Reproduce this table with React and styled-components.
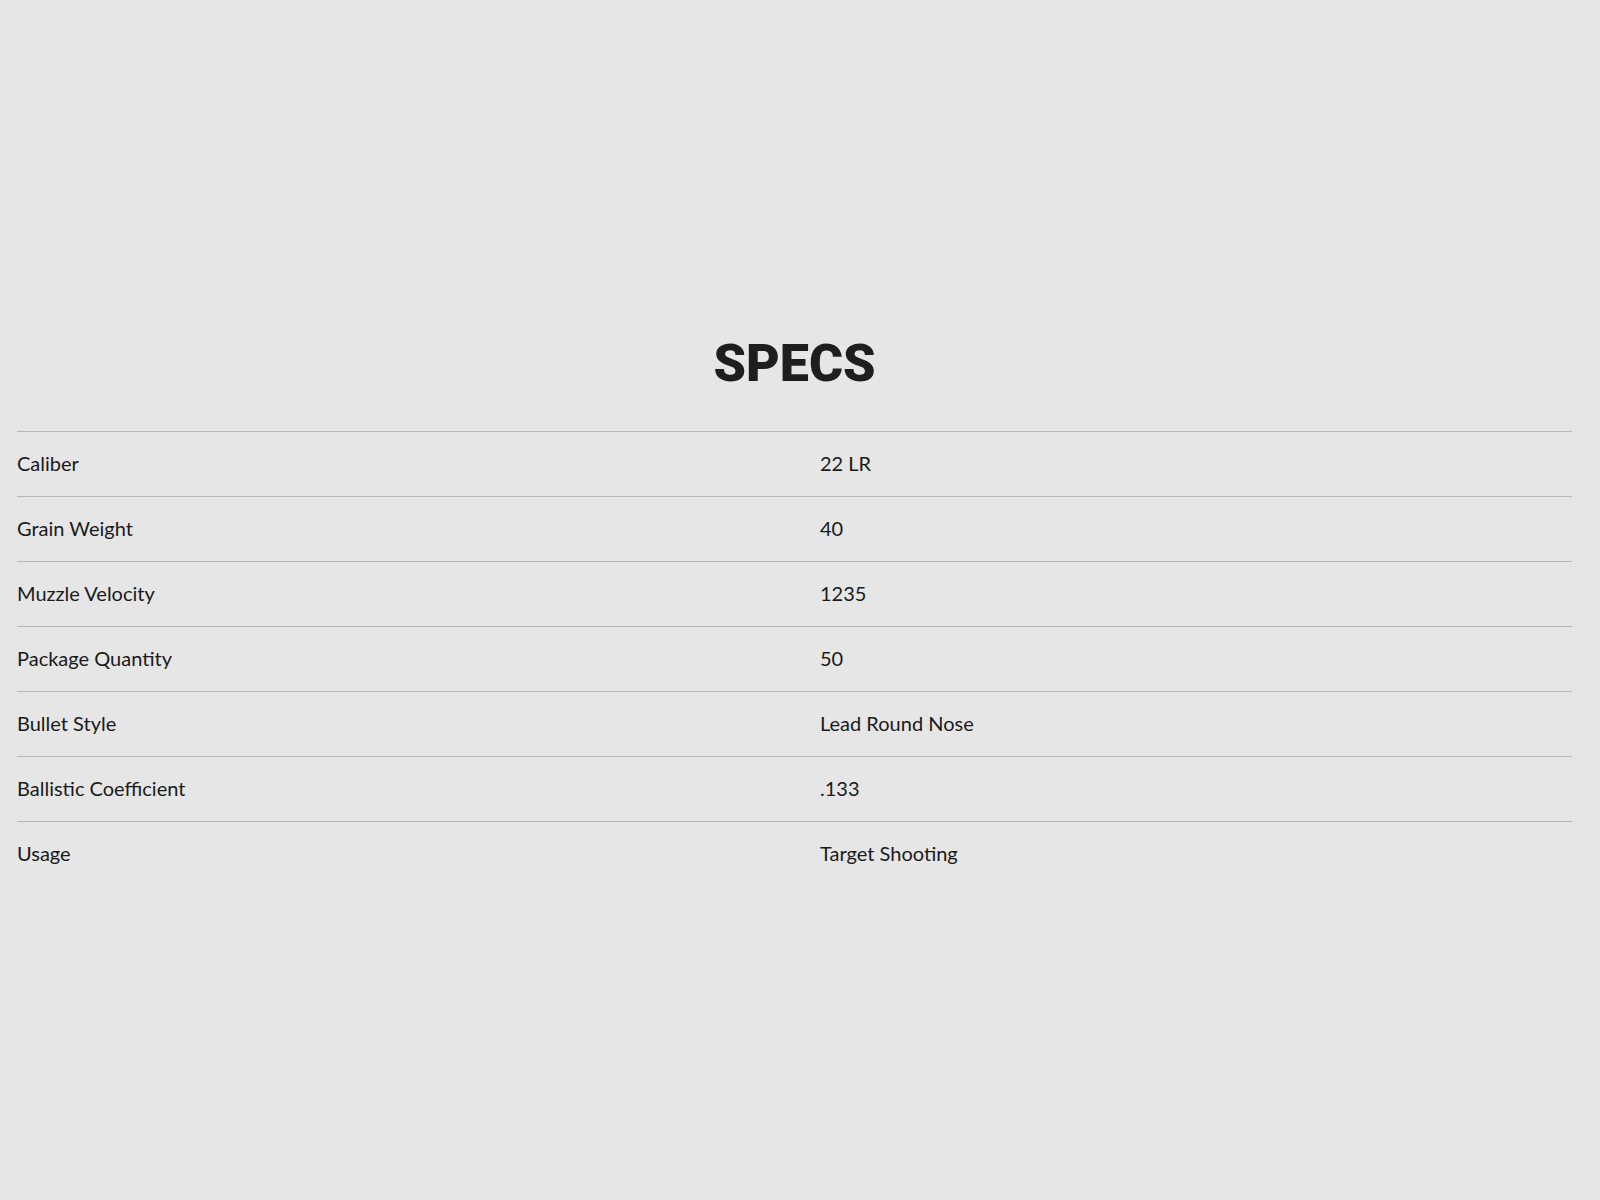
import React from 'react';
import styled, {createGlobalStyle} from 'styled-components';

//specs data
const specs = [
  ['Caliber', '22 LR'],
  ['Grain Weight', '40'],
  ['Muzzle Velocity', '1235'],
  ['Package Quantity', '50'],
  ['Bullet Style', 'Lead Round Nose'],
  ['Ballistic Coefficient', '.133'],
  ['Usage', 'Target Shooting'],
];

const App = () => {
  return (
    <>
      <GlobalStyle />
      <Page>
        <Title>SPECS</Title>
        <Table>
          {specs.map(([label, value]) => (
            <Row key={label}>
              <Label>{label}</Label>
              <Value>{value}</Value>
            </Row>
          ))}
        </Table>
      </Page>
    </>
  );
};

const GlobalStyle = createGlobalStyle`
body{
  margin:0;
  background:#e6e6e6;
  font-family:Lato, "Open Sans", sans-serif;
}
`
const Page = styled.section`
min-height:1200px;
padding:338px 28px 0 17px;
box-sizing:border-box;
`
const Title = styled.h2`
margin:0 0 41px;
text-align:center;
font-family:Roboto, "Liberation Sans", sans-serif;
font-weight:900;
font-size:52px;
line-height:1;
color:#1e1e1e;
`
const Table = styled.div`
display:flex;
flex-direction:column;
`
const Row = styled.div`
display:grid;
grid-template-columns:803px 1fr;
height:62px;
padding-bottom:2px;
border-top:1px solid #b7b7b7;
align-items:center;
font-size:20px;
line-height:62px;
color:#1a1a1a;
`
const Label = styled.span``
const Value = styled.span``

export default App;
